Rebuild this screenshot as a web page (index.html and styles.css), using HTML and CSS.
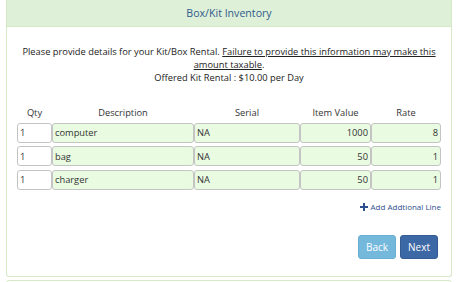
FILE: index.html
```html
<!DOCTYPE html>
<html lang="en">
<head>
  <meta charset="UTF-8" />
  <title>Box/Kit Inventory</title>
  <link rel="stylesheet" href="styles.css">
</head>
<body>

  <div class="panel">
    <div class="panel-heading">Box/Kit Inventory</div>

    <div class="panel-body">
      <p class="intro">
        Please provide details for your Kit/Box Rental. <u>Failure to provide this information may make this amount taxable</u>.<br>
        Offered Kit Rental : $10.00 per Day
      </p>

      <div class="kit-grid">
        <div class="col-head">Qty</div>
        <div class="col-head">Description</div>
        <div class="col-head">Serial</div>
        <div class="col-head">Item Value</div>
        <div class="col-head">Rate</div>

        <input class="qty" type="text" value="1">
        <input type="text" value="computer">
        <input type="text" value="NA">
        <input class="num" type="text" value="1000">
        <input class="num" type="text" value="8">

        <input class="qty" type="text" value="1">
        <input type="text" value="bag">
        <input type="text" value="NA">
        <input class="num" type="text" value="50">
        <input class="num" type="text" value="1">

        <input class="qty" type="text" value="1">
        <input type="text" value="charger">
        <input type="text" value="NA">
        <input class="num" type="text" value="50">
        <input class="num" type="text" value="1">
      </div>

      <div class="add-line">
        <a href="#">
          <svg width="8" height="8" viewBox="0 0 8 8"><path d="M3 0h2v3h3v2H5v3H3V5H0V3h3z" fill="#2f4f8f"/></svg>
          Add Addtional Line
        </a>
      </div>

      <div class="actions">
        <button class="btn btn-back">Back</button>
        <button class="btn btn-next">Next</button>
      </div>
    </div>
  </div>

  <div class="panel next-panel"></div>

</body>
</html>
```

FILE: styles.css
```css
* {
  box-sizing: border-box;
}

body {
  margin: 0;
  font-family: 'Open Sans', sans-serif;
  font-size: 9.3px;
  color: #222;
  background-color: #fff;
}

.panel {
  margin: 0 10px 0 6px;
  border: 1px solid #d6e9c6;
  border-top: none;
  border-radius: 0 0 3px 3px;
  background-color: #fff;
}

.panel-heading {
  background-color: #dff0d8;
  border-bottom: 1px solid #d6e9c6;
  color: #2f5b8c;
  text-align: center;
  font-size: 10.6px;
  height: 27px;
  line-height: 26px;
}

.panel-body {
  padding: 18px 10px 17px 10px;
}

.intro {
  margin: 0 0 22px 0;
  text-align: center;
  line-height: 13px;
}

.kit-grid {
  display: grid;
  grid-template-columns: 35px 142px 106px 71px 70px;
  row-gap: 3.5px;
}

.col-head {
  text-align: center;
  color: #333;
  height: 13px;
  line-height: 13px;
}

.kit-grid input {
  height: 20px;
  margin: 0;
  padding: 0 2px;
  font-family: 'Open Sans', sans-serif;
  font-size: 9.3px;
  color: #333;
  background-color: #e9fbe1;
  border: 1px solid #c4c4c4;
  border-radius: 3px;
  outline: none;
}

.kit-grid input.qty {
  background-color: #fff;
}

.kit-grid input.num {
  text-align: right;
}

.add-line {
  text-align: right;
  margin-top: 11px;
  font-size: 8px;
}

.add-line a {
  color: #2f4f8f;
  text-decoration: none;
}

.add-line svg {
  vertical-align: -1px;
}

.actions {
  display: flex;
  justify-content: flex-end;
  gap: 4px;
  margin-top: 23px;
  padding-right: 3px;
}

.btn {
  font-family: 'Open Sans', sans-serif;
  font-size: 10px;
  color: #fff;
  border: 1px solid transparent;
  border-radius: 3px;
  width: 38px;
  height: 24px;
  padding: 0;
  cursor: pointer;
}

.btn-back {
  background-color: #74b9dc;
  border-color: #6aaed2;
}

.btn-next {
  background-color: #3d68a6;
  border-color: #345b93;
}

.next-panel {
  margin-top: 3px;
  border-top: 1px solid #d6e9c6;
  border-radius: 3px 3px 0 0;
  height: 10px;
}
```
